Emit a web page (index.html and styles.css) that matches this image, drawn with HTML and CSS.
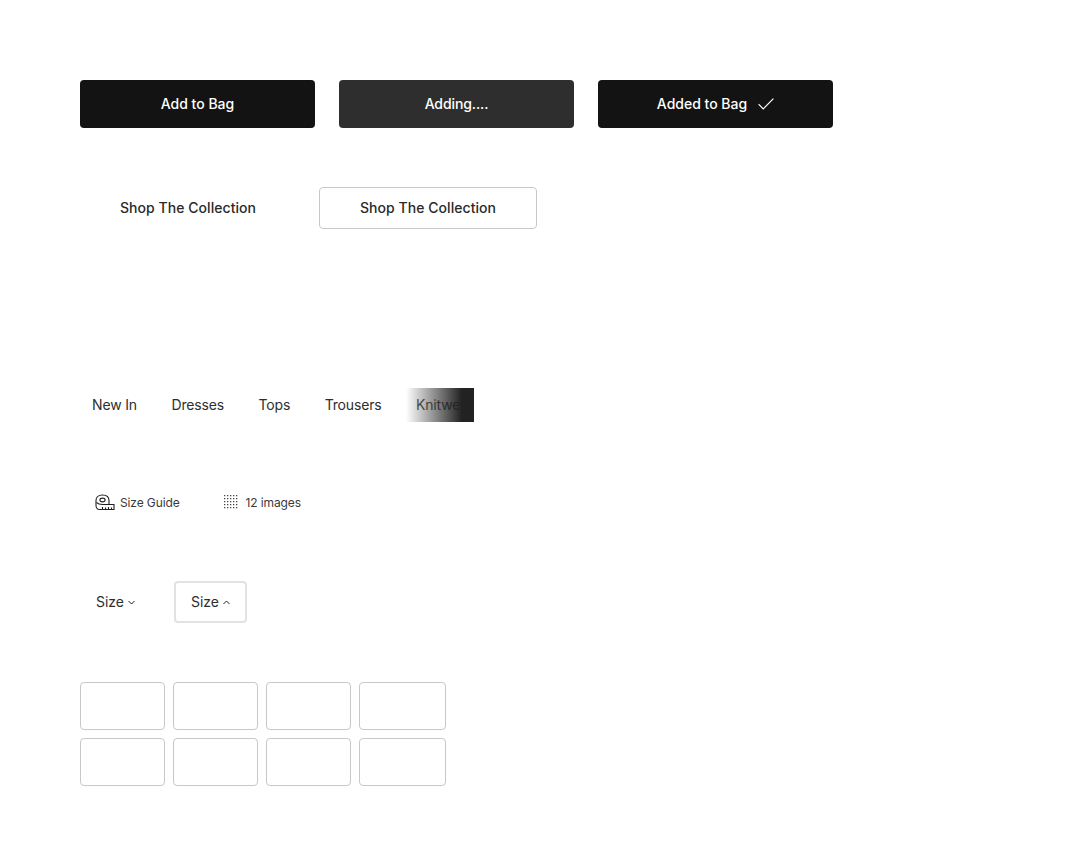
FILE: index.html
```html
<!DOCTYPE html>
<html lang="en">
  <head>
    <meta charset="UTF-8" />
    <title>Buttons</title>
    <link rel="stylesheet" href="styles.css">
  </head>
  <body>
    <div class="page">
      <div class="bag-buttons">
        <button class="bag-button">Add to Bag</button>
        <button class="bag-button is-adding">Adding....</button>
        <button class="bag-button">
          Added to Bag
          <svg class="check" width="16" height="12" viewBox="0 0 16 12" fill="none">
            <path d="M0.6 6.2L5.2 10.8L15.4 0.6" stroke="#fff" stroke-width="1.2" />
          </svg>
        </button>
      </div>

      <div class="shop-buttons">
        <button class="shop-button">Shop The Collection</button>
        <button class="shop-button is-outlined">Shop The Collection</button>
      </div>

      <div class="tabs">
        <a class="tab">New In</a>
        <a class="tab">Dresses</a>
        <a class="tab">Tops</a>
        <a class="tab">Trousers</a>
        <a class="tab">Knitwear</a>
        <div class="tabs-fade"></div>
      </div>

      <div class="links">
        <a class="link link-guide">
          <svg width="20" height="17" viewBox="0 0 20 17" fill="none" stroke="#222" stroke-width="1.1">
            <path d="M1 11.5V6.5C1 3 3.6 1 7.5 1C11.4 1 14 3 14 6.5V10.5H19V15.5H4.5C2.5 15.5 1 14 1 11.5Z" />
            <ellipse cx="7.5" cy="6" rx="2.6" ry="1.9" />
            <path d="M1.5 8.5C3 10 5 10.5 7.5 10.5H14" />
            <path d="M7.5 15.5V13M10.5 15.5V13.5M13.5 15.5V13M16.5 15.5V13.5" />
          </svg>
          Size Guide
        </a>
        <a class="link link-images">
          <svg width="14" height="14" viewBox="0 0 14 14" fill="#444">
            <path d="M0 0h1.3v1.3H0zM3 0h1.3v1.3H3zM6 0h1.3v1.3H6zM9 0h1.3v1.3H9zM12 0h1.3v1.3H12zM0 3h1.3v1.3H0zM3 3h1.3v1.3H3zM6 3h1.3v1.3H6zM9 3h1.3v1.3H9zM12 3h1.3v1.3H12zM0 6h1.3v1.3H0zM3 6h1.3v1.3H3zM6 6h1.3v1.3H6zM9 6h1.3v1.3H9zM12 6h1.3v1.3H12zM0 9h1.3v1.3H0zM3 9h1.3v1.3H3zM6 9h1.3v1.3H6zM9 9h1.3v1.3H9zM12 9h1.3v1.3H12zM0 12h1.3v1.3H0zM3 12h1.3v1.3H3zM6 12h1.3v1.3H6zM9 12h1.3v1.3H9zM12 12h1.3v1.3H12z" />
          </svg>
          12 images
        </a>
      </div>

      <div class="selects">
        <button class="select">
          Size
          <svg width="7" height="5" viewBox="0 0 7 5" fill="none" stroke="#222" stroke-width="1"><path d="M0.5 1L3.5 4L6.5 1" /></svg>
        </button>
        <button class="select is-open">
          Size
          <svg width="7" height="5" viewBox="0 0 7 5" fill="none" stroke="#222" stroke-width="1"><path d="M0.5 4L3.5 1L6.5 4" /></svg>
        </button>
      </div>

      <div class="sizes">
        <div class="size"></div>
        <div class="size"></div>
        <div class="size"></div>
        <div class="size"></div>
        <div class="size"></div>
        <div class="size"></div>
        <div class="size"></div>
        <div class="size"></div>
      </div>
    </div>
  </body>
</html>
```

FILE: styles.css
```css
* {
  margin: 0;
  padding: 0;
  box-sizing: border-box;
}

body {
  background-color: white;
  font-family: Inter, "Liberation Sans", sans-serif;
  font-size: 14px;
  color: #222;
}

.page {
  padding: 80px;
}

button {
  font-family: inherit;
  font-size: 14px;
  background: none;
  border: 0;
}

.bag-buttons {
  display: flex;
  gap: 24px;
}

.bag-button {
  display: flex;
  align-items: center;
  justify-content: center;
  gap: 11px;
  width: 235px;
  height: 48px;
  padding-bottom: 2px;
  border-radius: 4px;
  background-color: #131313;
  color: white;
  font-weight: 500;
}

.bag-button.is-adding {
  background-color: #2e2e2e;
  letter-spacing: -0.1px;
}

.check {
  margin-top: 2px;
}

.shop-buttons {
  display: flex;
  gap: 23px;
  margin-top: 59px;
}

.shop-button {
  width: 216px;
  height: 42px;
  padding-bottom: 2px;
  border: 1px solid transparent;
  border-radius: 4px;
  color: #2a2a2a;
  font-weight: 500;
  letter-spacing: 0.05px;
}

.shop-button.is-outlined {
  width: 218px;
  border-color: #c8c8c8;
}

.tabs {
  position: relative;
  display: flex;
  align-items: center;
  gap: 34.5px;
  width: 394px;
  height: 34px;
  margin-top: 159px;
  padding-left: 12px;
  padding-bottom: 2px;
  overflow: hidden;
  white-space: nowrap;
  letter-spacing: -0.16px;
  color: #2e2e2e;
}

.tabs-fade {
  position: absolute;
  top: 0;
  right: 0;
  width: 68px;
  height: 100%;
  background: linear-gradient(to right, rgba(255, 255, 255, 0.2), rgba(34, 34, 34, 0.85) 70%, #222 82%);
}

.links {
  display: flex;
  margin-top: 70px;
  font-size: 12px;
  color: #3a3a3a;
  letter-spacing: -0.12px;
}

.link {
  display: flex;
  align-items: center;
  height: 20px;
}

.link-guide {
  gap: 5px;
  margin-left: 15px;
}

.link-images {
  gap: 8px;
  margin-left: 44px;
}

.selects {
  display: flex;
  margin-top: 69px;
}

.select {
  display: flex;
  align-items: center;
  justify-content: center;
  gap: 4px;
  width: 73px;
  height: 42px;
  padding-bottom: 2px;
  border: 2px solid transparent;
  border-radius: 4px;
  color: #2e2e2e;
}

.select:first-child {
  padding-right: 2px;
}

.select.is-open {
  margin-left: 21px;
  border-color: #e2e2e2;
}

.select svg {
  margin-top: 2px;
}

.sizes {
  display: grid;
  grid-template-columns: 85px 85px 85px 87px;
  gap: 8px;
  margin-top: 59px;
}

.size {
  height: 48px;
  border: 1px solid #c8c8c8;
  border-radius: 4px;
}
```
